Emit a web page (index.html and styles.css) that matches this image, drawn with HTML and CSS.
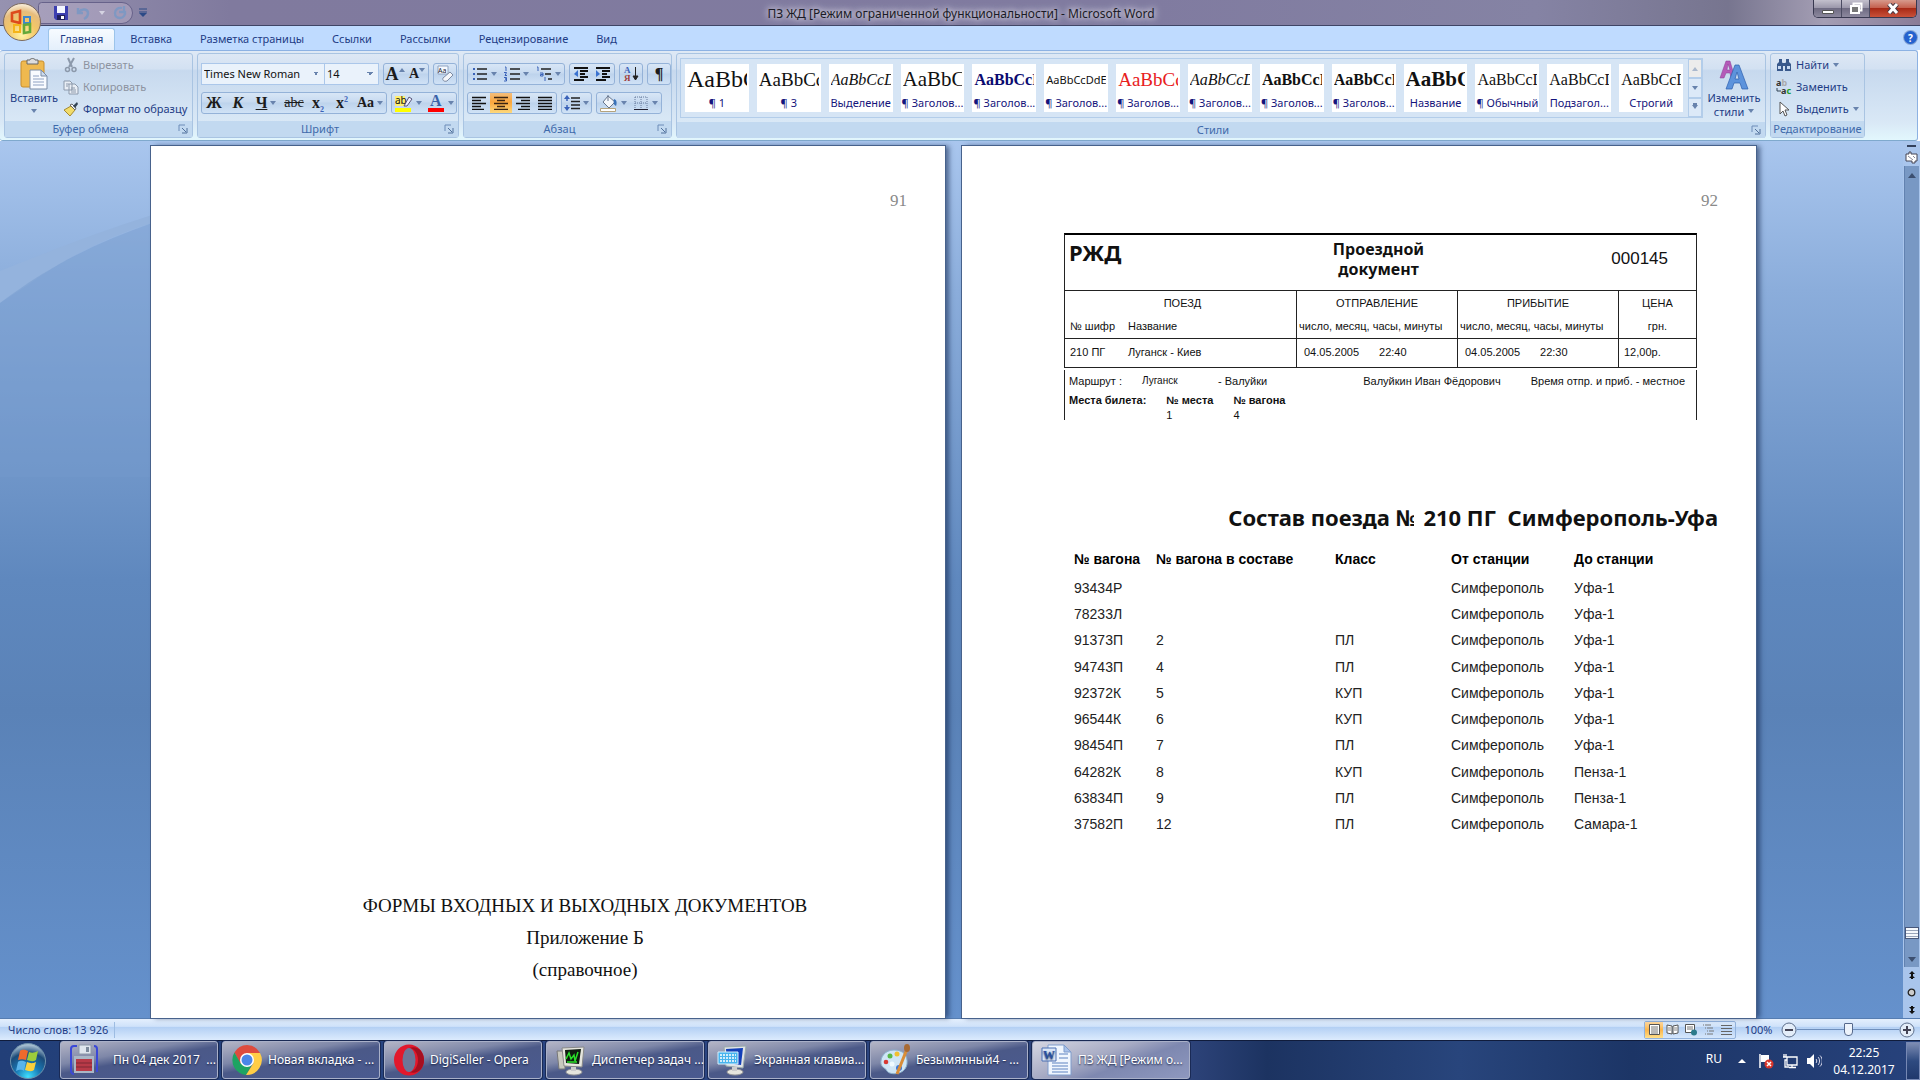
FILE: index.html
```
<!DOCTYPE html>
<html lang="ru">
<head>
    <meta charset="UTF-8">
    <meta name="viewport" content="width=device-width, initial-scale=1.0">
    <title>ПЗ ЖД - Microsoft Word</title>
    <link rel="stylesheet" href="styles.css">
</head>
<body>
    <!-- Title bar -->
    <header class="titlebar">
        <button class="orb" aria-label="Office">
            <svg width="40" height="40" viewBox="0 0 40 40">
                <defs><radialGradient id="gold" cx="50%" cy="85%" r="85%"><stop offset="0" stop-color="#fff3a8"/><stop offset=".45" stop-color="#f3c766"/><stop offset=".75" stop-color="#e6bc7c"/><stop offset="1" stop-color="#fbf3e4"/></radialGradient></defs>
                <circle cx="20" cy="20" r="18.500" fill="url(#gold)" stroke="#7c6a5e"/>
                <g fill="none" stroke-width="2.600">
                    <path d="M18 9l-8 2v8l8 2z" stroke="#dd4a1c"/>
                    <path d="M22 15h6v6h-6z" stroke="#3c87cf" stroke-width="2"/>
                    <path d="M12 23h6v7h-6z" stroke="#f4b41a" stroke-width="2"/>
                    <path d="M22 23l6 -1v8l-6 1z" stroke="#63a83a"/>
                </g>
            </svg>
        </button>
        <div class="quick">
            <button aria-label="Сохранить"><svg width="16" height="16" viewBox="0 0 16 16"><path d="M1 1h14v14H3l-2-2z" fill="#3d3fb0"/><path d="M4 1h8v7H4z" fill="#f3f6ff"/><path d="M4 10h8v5H4z" fill="#20205c"/><path d="M8 11h3v3H8z" fill="#fff"/></svg></button>
            <button aria-label="Отменить"><svg width="16" height="16" viewBox="0 0 16 16"><path d="M2 3v5h5M3 7c3-4 9-3 9 1 0 3-2 5-4 6" fill="none" stroke="#7f98c2" stroke-width="2.500"/></svg></button>
            <i class="caret light"></i>
            <button aria-label="Повторить"><svg width="16" height="16" viewBox="0 0 16 16"><path d="M10 3C6 2 3 5 3 8s2 5 5 5 6-3 5-7M12 1v6H7" fill="none" stroke="#7f98c2" stroke-width="2.300"/></svg></button>
        </div>
        <button class="customize" aria-label="Настройка панели"><svg width="10" height="10" viewBox="0 0 10 10"><path d="M1 1h8M1 4h8" stroke="#2c4a86"/><path d="M1 5h8L5 9z" fill="#2c4a86"/></svg></button>
        <h1>ПЗ ЖД [Режим ограниченной функциональности] - Microsoft Word</h1>
        <div class="window-buttons">
            <button aria-label="Свернуть"><svg width="12" height="12" viewBox="0 0 12 12"><path d="M.5 7.500h11v3H.5z" fill="#fff" stroke="#555"/></svg></button>
            <button aria-label="Развернуть"><svg width="14" height="13" viewBox="0 0 14 13"><path d="M4.500 1.500h8v7h-8z" fill="none" stroke="#fff" stroke-width="2"/><path d="M2 4h8v7H2z" fill="#777" stroke="#fff" stroke-width="2"/></svg></button>
            <button class="close" aria-label="Закрыть"><svg width="12" height="11" viewBox="0 0 12 11"><path d="M2 1l8 9M10 1L2 10" stroke="#4b3a44" stroke-width="5"/><path d="M2 1l8 9M10 1L2 10" stroke="#fff" stroke-width="3"/></svg></button>
        </div>
    </header>

    <!-- Ribbon tabs -->
    <nav class="tabs">
        <a href="#" class="active">Главная</a>
        <a href="#">Вставка</a>
        <a href="#">Разметка страницы</a>
        <a href="#">Ссылки</a>
        <a href="#">Рассылки</a>
        <a href="#">Рецензирование</a>
        <a href="#">Вид</a>
        <button class="help" aria-label="Справка">?</button>
    </nav>

    <!-- Ribbon -->
    <div class="ribbon">
        <section class="group clipboard">
            <div class="tools">
                <button class="big">
                    <svg width="30" height="32" viewBox="0 0 30 32"><rect x="2" y="3" width="23" height="26" rx="2" fill="#efb94f" stroke="#c98e2c"/><path d="M8 2h3c0-2 5-2 5 0h3v4H8z" fill="#ddd" stroke="#666"/><path d="M11 12h11l6 6v13H11z" fill="#f8fbff" stroke="#7b8da8"/><path d="M22 12v6h6z" fill="#cddbed" stroke="#7b8da8"/><path d="M14 18h6M14 21h11M14 24h11M14 27h11" stroke="#8ea1c2"/></svg>
                    <span>Вставить</span>
                    <i class="caret"></i>
                </button>
                <div class="stack">
                    <button class="line off"><svg width="16" height="16" viewBox="0 0 16 16"><path d="M5 1l4 9M11 1L6 10" stroke="#8c99ab" stroke-width="2"/><circle cx="4.500" cy="12.500" r="2" fill="none" stroke="#8c99ab" stroke-width="1.500"/><circle cx="11" cy="12.500" r="2" fill="none" stroke="#8c99ab" stroke-width="1.500"/></svg>Вырезать</button>
                    <button class="line off"><svg width="16" height="16" viewBox="0 0 16 16"><path d="M1 2h6l2 2v7H1zM6 5h6l3 3v7H6z" fill="#e9eef5" stroke="#8c99ab"/><path d="M3 5h3M3 7h2M8 9h4M8 11h5M8 13h5" stroke="#8c99ab"/></svg>Копировать</button>
                    <button class="line"><svg width="16" height="16" viewBox="0 0 16 16"><path d="M8 5l4 4-5 6-6-6z" fill="#f2dc6a" stroke="#a58a32"/><path d="M7 4l5 5 1-2-4-4z" fill="#fff" stroke="#666"/><path d="M10 5l4-4 1 2-3 4z" fill="#345"/></svg>Формат по образцу</button>
                </div>
            </div>
            <h2>Буфер обмена<svg class="launch" width="10" height="10" viewBox="0 0 10 10"><path d="M1 7V1h6" fill="none" stroke="#6c8cb8"/><path d="M4 4l4 4M9 4v5H4" fill="none" stroke="#50709c"/></svg></h2>
        </section>

        <section class="group font">
            <div class="tools rows">
                <div class="row">
                    <div class="combos">
                        <select class="font-name" aria-label="Шрифт"><option>Times New Roman</option></select>
                        <select class="font-size" aria-label="Размер"><option>14</option></select>
                    </div>
                    <div class="set">
                        <button class="serif grow" aria-label="Увеличить размер">A<i class="caret up"></i></button>
                        <button class="serif shrink" aria-label="Уменьшить размер">A<i class="caret"></i></button>
                    </div>
                    <div class="set"><button aria-label="Очистить формат"><svg width="18" height="18" viewBox="0 0 18 18"><path d="M2 1h10v8H2z" fill="#f7faff" stroke="#8fa3c0"/><text x="2" y="8" font-size="7" font-family="Noto Sans" fill="#223">Aa</text><path d="M7 13l7-6 3 3-6 6c-3 1-5-1-4-3z" fill="#f4f6fa" stroke="#7d8ba3"/></svg></button></div>
                </div>
                <div class="row">
                    <div class="set">
                        <button class="serif"><b>Ж</b></button>
                        <button class="serif"><b><em>К</em></b></button>
                        <button class="serif wide"><b><u>Ч</u></b><i class="caret"></i></button>
                        <button class="serif small"><s>abc</s></button>
                        <button class="serif"><b>x<sub>2</sub></b></button>
                        <button class="serif"><b>x<sup>2</sup></b></button>
                        <button class="serif wide small"><b>Aa</b><i class="caret"></i></button>
                    </div>
                    <div class="set">
                        <button class="wide" aria-label="Цвет выделения"><svg width="18" height="18" viewBox="0 0 18 18"><path d="M0 2h10v10H0z" fill="#ffef6e"/><text x="0" y="10" font-size="10" font-family="Noto Sans" fill="#111">ab</text><path d="M9 12l5-9 3 2-5 7z" fill="#eef" stroke="#557"/><path d="M0 14h16v4H0z" fill="#ff0"/></svg><i class="caret"></i></button>
                        <button class="wide" aria-label="Цвет текста"><svg width="18" height="18" viewBox="0 0 18 18"><text x="3" y="12" font-size="16" font-weight="bold" font-family="Liberation Serif" fill="#3a62a8">A</text><path d="M1 14h16v4H1z" fill="#f00"/></svg><i class="caret"></i></button>
                    </div>
                </div>
            </div>
            <h2>Шрифт<svg class="launch" width="10" height="10" viewBox="0 0 10 10"><path d="M1 7V1h6" fill="none" stroke="#6c8cb8"/><path d="M4 4l4 4M9 4v5H4" fill="none" stroke="#50709c"/></svg></h2>
        </section>

        <section class="group paragraph">
            <div class="tools rows">
                <div class="row">
                    <div class="set">
                        <button class="wide" aria-label="Маркеры"><svg width="16" height="16" viewBox="0 0 16 16"><path d="M5 3h10M5 8h10M5 13h10" stroke="#222" stroke-width="1.500"/><path d="M1 2h2v2H1zM1 7h2v2H1zM1 12h2v2H1z" fill="#3a62b8"/></svg><i class="caret"></i></button>
                        <button class="wide" aria-label="Нумерация"><svg width="16" height="16" viewBox="0 0 16 16"><path d="M6 3h10M6 8h10M6 13h10" stroke="#222" stroke-width="1.500"/><path d="M1 1h1v4M0 6.500h2.500L1 9.500h2M0 11.500h2.500v1.500H1h1.500v2H0" fill="none" stroke="#3a62b8"/></svg><i class="caret"></i></button>
                        <button class="wide" aria-label="Многоуровневый список"><svg width="16" height="16" viewBox="0 0 16 16"><path d="M5 3h10M9 8h6M12 13h4" stroke="#222" stroke-width="1.500"/><path d="M1 1h1v4M4 7h3v3H4.500V8.500H7M9 11v4" fill="none" stroke="#3a62b8"/></svg><i class="caret"></i></button>
                    </div>
                    <div class="set">
                        <button aria-label="Уменьшить отступ"><svg width="16" height="16" viewBox="0 0 16 16"><path d="M1 2h14M7 5h8M7 8h5M7 11h8M1 14h10" stroke="#111" stroke-width="2"/><path d="M5 4L1 8l4 3z" fill="#3a72d0"/></svg></button>
                        <button aria-label="Увеличить отступ"><svg width="16" height="16" viewBox="0 0 16 16"><path d="M1 2h14M7 5h8M7 8h5M7 11h8M1 14h10" stroke="#111" stroke-width="2"/><path d="M1 4l4 4-4 3z" fill="#3a72d0"/></svg></button>
                    </div>
                    <div class="set"><button aria-label="Сортировка"><svg width="16" height="18" viewBox="0 0 16 18"><text x="1" y="8" font-size="9" font-weight="bold" font-family="Liberation Serif" fill="#3a62b8">А</text><text x="1" y="16" font-size="9" font-weight="bold" font-family="Liberation Serif" fill="#a04040">Я</text><path d="M12.500 2v12M10 11l2.500 4 2.500-4z" stroke="#222" fill="#222"/></svg></button></div>
                    <div class="set"><button class="serif" aria-label="Знаки абзаца"><b>¶</b></button></div>
                </div>
                <div class="row">
                    <div class="set">
                        <button aria-label="По левому краю"><svg width="16" height="14" viewBox="0 0 16 14"><path d="M1 1.500h14M1 4.500h9M1 7.500h14M1 10.500h9M1 13.500h12" stroke="#111" stroke-width="1.500"/></svg></button>
                        <button class="pressed" aria-label="По центру"><svg width="16" height="14" viewBox="0 0 16 14"><path d="M1 1.500h14M4 4.500h8M1 7.500h14M4 10.500h8M1 13.500h14" stroke="#3a2412" stroke-width="1.500"/></svg></button>
                        <button aria-label="По правому краю"><svg width="16" height="14" viewBox="0 0 16 14"><path d="M1 1.500h14M6 4.500h9M1 7.500h14M6 10.500h9M3 13.500h12" stroke="#111" stroke-width="1.500"/></svg></button>
                        <button aria-label="По ширине"><svg width="16" height="14" viewBox="0 0 16 14"><path d="M1 1.500h14M1 4.500h14M1 7.500h14M1 10.500h14M1 13.500h14" stroke="#111" stroke-width="1.500"/></svg></button>
                    </div>
                    <div class="set"><button class="mid" aria-label="Интервал"><svg width="16" height="16" viewBox="0 0 16 16"><path d="M7 3h9M7 6.500h9M7 10h9M7 13.500h9" stroke="#222" stroke-width="1.500"/><path d="M3 0l3 4H0zM3 16l3-4H0z" fill="#3a62b8"/><path d="M3 3v3M3 10v3" stroke="#3a62b8" stroke-width="1.500"/></svg><i class="caret"></i></button></div>
                    <div class="set">
                        <button class="wide" aria-label="Заливка"><svg width="18" height="18" viewBox="0 0 18 18"><path d="M8 2l7 6-6 6-6-6z" fill="#f4f7fb" stroke="#66758c"/><path d="M14 5c3 1 3 4 2 7-2-1-3-3-2-7z" fill="#3a72b8"/><path d="M8 1v6" stroke="#66758c"/><path d="M.5 14.500h15v3H.5z" fill="#fff" stroke="#b5a37c"/></svg><i class="caret"></i></button>
                        <button class="wide" aria-label="Границы"><svg width="16" height="16" viewBox="0 0 16 16"><path d="M2 2h12v12M2 2v12M8 2v12M2 8h12" fill="none" stroke="#667a9c" stroke-dasharray="1 1"/><path d="M1 14.500h14" stroke="#223"/></svg><i class="caret"></i></button>
                    </div>
                </div>
            </div>
            <h2>Абзац<svg class="launch" width="10" height="10" viewBox="0 0 10 10"><path d="M1 7V1h6" fill="none" stroke="#6c8cb8"/><path d="M4 4l4 4M9 4v5H4" fill="none" stroke="#50709c"/></svg></h2>
        </section>

        <section class="group styles">
            <div class="tools">
                <div class="gallery">
                    <button class="tile xl"><span>AaBbC</span>¶ 1</button>
                    <button class="tile lg"><span>AaBbCc</span>¶ 3</button>
                    <button class="tile it"><span>AaBbCcD</span>Выделение</button>
                    <button class="tile h1"><span>AaBbC</span>¶ Заголов...</button>
                    <button class="tile bold navy"><span>AaBbCcD</span>¶ Заголов...</button>
                    <button class="tile sans"><span>AaBbCcDdE</span>¶ Заголов...</button>
                    <button class="tile lg red"><span>AaBbCc</span>¶ Заголов...</button>
                    <button class="tile it"><span>AaBbCcD</span>¶ Заголов...</button>
                    <button class="tile bold"><span>AaBbCcD</span>¶ Заголов...</button>
                    <button class="tile bold"><span>AaBbCcD</span>¶ Заголов...</button>
                    <button class="tile h1 bold"><span>AaBbC</span>Название</button>
                    <button class="tile"><span>AaBbCcD</span>¶ Обычный</button>
                    <button class="tile"><span>AaBbCcD</span>Подзагол...</button>
                    <button class="tile"><span>AaBbCcD</span>Строгий</button>
                    <div class="scrollers">
                        <button class="off" aria-label="Вверх"><i class="caret up"></i></button>
                        <button aria-label="Вниз"><i class="caret"></i></button>
                        <button class="more" aria-label="Все стили"><i class="caret"></i></button>
                    </div>
                </div>
                <button class="big change">
                    <svg width="32" height="32" viewBox="0 0 32 32"><path d="M2 20L8 3h4l5 17h-4l-1-5H8l-2 5zM9 12h3l-2-6z" fill="#b45ab8" stroke="#8b3f94" stroke-width=".5" fill-rule="evenodd"/><path d="M8 31L17 7h4l9 24h-6l-2-6h-6l-2 6zM17 21h4l-2-7z" fill="#5d93dc" stroke="#2c5fae" stroke-width=".7" fill-rule="evenodd"/></svg>
                    <span>Изменить<br>стили <i class="caret"></i></span>
                </button>
            </div>
            <h2>Стили<svg class="launch" width="10" height="10" viewBox="0 0 10 10"><path d="M1 7V1h6" fill="none" stroke="#6c8cb8"/><path d="M4 4l4 4M9 4v5H4" fill="none" stroke="#50709c"/></svg></h2>
        </section>

        <section class="group editing">
            <div class="tools">
                <div class="stack">
                    <button class="line"><svg width="16" height="16" viewBox="0 0 16 16"><path d="M3 2h3v3l1 2v7H1V7l2-2zM10 2h3v3l2 2v7H9V7l1-2zM6 6h4v3H6z" fill="#39598c"/><path d="M2 9h3v3H2zM11 9h3v3h-3z" fill="#c8daf2"/></svg>Найти<i class="caret"></i></button>
                    <button class="line"><svg width="16" height="16" viewBox="0 0 16 16"><text x="0" y="7" font-size="9" font-weight="bold" font-family="Noto Sans" fill="#333">a<tspan fill="#aaa">b</tspan></text><text x="5" y="15" font-size="9" font-weight="bold" font-family="Noto Sans" fill="#333">a<tspan fill="#1b9c2c">c</tspan></text><path d="M1 9v3h4" fill="none" stroke="#345"/></svg>Заменить</button>
                    <button class="line"><svg width="16" height="16" viewBox="0 0 16 16"><path d="M4 1v12l3-3 2 5 2-1-2-5h4z" fill="#fff" stroke="#555"/></svg>Выделить<i class="caret"></i></button>
                </div>
            </div>
            <h2>Редактирование</h2>
        </section>
    </div>

    <!-- Document area -->
    <main class="workspace">
        <svg class="swoosh" width="152" height="330" viewBox="0 0 152 330" preserveAspectRatio="none"><path d="M0 124C50 104 100 84 152 68v8C100 92 60 115 28 138L0 156z" fill="#94b3dd"/><path d="M0 156C50 118 100 94 152 76v254H0z" fill="#7399cb" fill-opacity=".45"/></svg>
        <div class="pages">
            <article class="page first">
                <p class="page-number">91</p>
                <div class="appendix">
                    <p>ФОРМЫ ВХОДНЫХ И ВЫХОДНЫХ ДОКУМЕНТОВ</p>
                    <p>Приложение Б</p>
                    <p>(справочное)</p>
                </div>
            </article>

            <article class="page second">
                <p class="page-number">92</p>
                <div class="ticket">
                    <div class="ticket-head">
                        <strong class="company">РЖД</strong>
                        <strong class="doc-name">Проездной<br>документ</strong>
                        <span class="doc-number">000145</span>
                    </div>
                    <table class="trip">
                        <thead>
                            <tr><th class="train">ПОЕЗД</th><th class="time">ОТПРАВЛЕНИЕ</th><th class="time">ПРИБЫТИЕ</th><th>ЦЕНА</th></tr>
                            <tr><td><span class="code">№ шифр</span>Название</td><td class="tight">число, месяц, часы, минуты</td><td class="tight">число, месяц, часы, минуты</td><td class="center">грн.</td></tr>
                        </thead>
                        <tbody>
                            <tr><td><span class="code">210 ПГ</span>Луганск - Киев</td><td class="when"><span>04.05.2005</span><span>22:40</span></td><td class="when"><span>04.05.2005</span><span>22:30</span></td><td>12,00р.</td></tr>
                        </tbody>
                    </table>
                    <div class="ticket-tail">
                        <div class="route"><span>Маршрут :</span><small>Луганск</small><span>- Валуйки</span><span class="passenger">Валуйкин Иван Фёдорович</span><span>Время отпр. и приб. - местное</span></div>
                        <dl class="seats">
                            <dt>Места билета:</dt>
                            <div><dt>№ места</dt><dd>1</dd></div>
                            <div><dt>№ вагона</dt><dd>4</dd></div>
                        </dl>
                    </div>
                </div>

                <h2 class="train-title">Состав поезда <span class="cut">№</span> 210 ПГ&nbsp; Симферополь-Уфа</h2>
                <table class="cars">
                    <thead>
                        <tr><th class="c1">№ вагона</th><th class="c2">№ вагона в составе</th><th class="c3">Класс</th><th class="c4">От станции</th><th>До станции</th></tr>
                    </thead>
                    <tbody>
                        <tr><td>93434Р</td><td></td><td></td><td>Симферополь</td><td>Уфа-1</td></tr>
                        <tr><td>78233Л</td><td></td><td></td><td>Симферополь</td><td>Уфа-1</td></tr>
                        <tr><td>91373П</td><td>2</td><td>ПЛ</td><td>Симферополь</td><td>Уфа-1</td></tr>
                        <tr><td>94743П</td><td>4</td><td>ПЛ</td><td>Симферополь</td><td>Уфа-1</td></tr>
                        <tr><td>92372К</td><td>5</td><td>КУП</td><td>Симферополь</td><td>Уфа-1</td></tr>
                        <tr><td>96544К</td><td>6</td><td>КУП</td><td>Симферополь</td><td>Уфа-1</td></tr>
                        <tr><td>98454П</td><td>7</td><td>ПЛ</td><td>Симферополь</td><td>Уфа-1</td></tr>
                        <tr><td>64282К</td><td>8</td><td>КУП</td><td>Симферополь</td><td>Пенза-1</td></tr>
                        <tr><td>63834П</td><td>9</td><td>ПЛ</td><td>Симферополь</td><td>Пенза-1</td></tr>
                        <tr><td>37582П</td><td>12</td><td>ПЛ</td><td>Симферополь</td><td>Самара-1</td></tr>
                    </tbody>
                </table>
            </article>
        </div>

        <aside class="scrollbar">
            <i class="split"></i>
            <button aria-label="Линейка"><svg width="13" height="13" viewBox="0 0 13 13"><path d="M1 3h3V1h2v2h6v7h-2v2H7v-2H1z" fill="#fff" stroke="#445"/><path d="M3 5l5 4M8 5l2 2" stroke="#889"/></svg></button>
            <div class="track">
                <i class="caret up dark"></i>
                <div class="thumb"></div>
                <i class="caret dark"></i>
            </div>
            <button aria-label="Предыдущая страница"><svg width="8" height="9" viewBox="0 0 8 9"><path d="M4 0l3 3H1zM4 4l3 3H1z" fill="#111"/><path d="M3 3h2v5H3z" fill="#111"/></svg></button>
            <button aria-label="Выбор объекта"><svg width="9" height="9" viewBox="0 0 9 9"><circle cx="4.500" cy="4.500" r="3.300" fill="#ccc" stroke="#222" stroke-width="1.300"/></svg></button>
            <button aria-label="Следующая страница"><svg width="8" height="9" viewBox="0 0 8 9"><path d="M4 9l3-3H1zM4 5l3-3H1z" fill="#111"/><path d="M3 1h2v5H3z" fill="#111"/></svg></button>
        </aside>
    </main>

    <!-- Status bar -->
    <footer class="status">
        <span class="words">Число слов: 13 926</span>
        <div class="views">
            <button class="pressed" aria-label="Разметка страницы"><svg width="13" height="13" viewBox="0 0 13 13"><path d="M1.500 1.500h10v10h-10z" fill="#fff" stroke="#555"/><path d="M3 4h7M3 6h7M3 8h7M3 10h7" stroke="#777"/></svg></button>
            <button aria-label="Режим чтения"><svg width="13" height="13" viewBox="0 0 13 13"><path d="M1 2l5 1v8l-5-1zM12 2L7 3v8l5-1z" fill="#fff" stroke="#555"/><path d="M2 5h3M2 7h3M8 5h3M8 7h3" stroke="#888"/></svg></button>
            <button aria-label="Веб-документ"><svg width="13" height="13" viewBox="0 0 13 13"><path d="M1.500 1.500h9v8h-9z" fill="#fff" stroke="#555"/><path d="M3 4h6M3 6h6" stroke="#777"/><circle cx="10" cy="9.500" r="3" fill="#2b7a8c"/></svg></button>
            <button aria-label="Структура"><svg width="13" height="13" viewBox="0 0 13 13"><path d="M1 2h8M3 5h8M5 8h7M3 11h8" stroke="#777" stroke-dasharray="1 1 8"/></svg></button>
            <button aria-label="Черновик"><svg width="13" height="13" viewBox="0 0 13 13"><path d="M1 2.500h11M1 5.500h11M1 8.500h11M1 11.500h11" stroke="#666"/></svg></button>
        </div>
        <label class="percent" for="zoom">100%</label>
        <div class="zoom">
            <button aria-label="Уменьшить"><svg width="16" height="16" viewBox="0 0 16 16"><circle cx="8" cy="8" r="7" fill="#e3edf9" stroke="#5d6f8c"/><path d="M4 8h8" stroke="#445" stroke-width="2"/></svg></button>
            <input type="range" id="zoom" min="0" max="200" value="100">
            <button aria-label="Увеличить"><svg width="16" height="16" viewBox="0 0 16 16"><circle cx="8" cy="8" r="7" fill="#e3edf9" stroke="#5d6f8c"/><path d="M4 8h8M8 4v8" stroke="#445" stroke-width="2"/></svg></button>
        </div>
    </footer>

    <!-- Taskbar -->
    <div class="taskbar">
        <button class="start" aria-label="Пуск">
            <svg width="38" height="38" viewBox="0 0 38 38"><defs><radialGradient id="blue" cx="50%" cy="95%" r="90%"><stop offset="0" stop-color="#3fe0ff"/><stop offset=".4" stop-color="#1878b4"/><stop offset=".75" stop-color="#1c4a78"/><stop offset="1" stop-color="#a5bdd0"/></radialGradient></defs><circle cx="19" cy="19" r="17.500" fill="url(#blue)" stroke="#6f93ac"/><path d="M11 9c3-2 5-1 8 0l-2 9c-3-1-5-1-8 0z" fill="#ee6a2c"/><path d="M20 10c3 1 5 1 9-1l-2 9c-3 2-6 1-9 0z" fill="#9ccc3c"/><path d="M9 20c3-2 5-1 8 0l-2 9c-3-2-5-1-8 0z" fill="#5ab4ea"/><path d="M18 20c3 1 5 2 9 0l-2 8c-3 2-6 1-9 0z" fill="#fbd03c"/></svg>
        </button>
        <button class="task backup"><svg width="32" height="32" viewBox="0 0 32 32"><path d="M8 2H5c-2 0-3 1-3 3v22c0 2 2 3 3 3M25 2c2 0 3 1 3 3v23" fill="none" stroke="#3a48d8" stroke-width="2"/><path d="M5 12h20v17H5z" fill="#a9b7c6"/><path d="M10 1h12v9H10z" fill="#dfe6ee" stroke="#8c98a8"/><path d="M17 3h3v5h-3z" fill="#7c8a9c"/><path d="M7 15h16v12H7z" fill="#b83a48"/><path d="M7 19h16M7 23h16" stroke="#7c2834"/></svg>Пн 04 дек 2017&nbsp; ...</button>
        <button class="task"><svg width="32" height="32" viewBox="0 0 32 32"><path d="M16 1a15 15 0 0 0-12.600 7.500L9.500 20 16 9h13A15 15 0 0 0 16 1z" fill="#dd4b3e"/><path d="M3.400 8.500A15 15 0 0 0 15 31l6.500-11.500L10 20z" fill="#1ea362"/><path d="M29 9H17l5.500 10L15 31A15 15 0 0 0 29 9z" fill="#ffcd46"/><circle cx="16" cy="16" r="7" fill="#fff"/><circle cx="16" cy="16" r="5.500" fill="#4a86e8"/></svg>Новая вкладка - ...</button>
        <button class="task"><svg width="32" height="32" viewBox="0 0 32 32"><ellipse cx="16" cy="16" rx="15" ry="15.500" fill="#e2182c"/><path d="M16 28c5 0 9-5 9-12S21 4 16 4c8-3 15 3 15 12S24 31 16 28z" fill="#a50f20"/><ellipse cx="16" cy="16" rx="6.500" ry="12" fill="#6d7698"/></svg>DigiSeller - Opera</button>
        <button class="task"><svg width="32" height="32" viewBox="0 0 32 32"><path d="M2 7h8v18H4z" fill="#c8c8be" stroke="#777"/><path d="M7 4l22-1-2 20-18-1z" fill="#e6e6de" stroke="#888"/><path d="M10 6l16-1-2 15-13-1z" fill="#101c10"/><path d="M11 15l3-6 2 6 3-4 1 6 3-9M12 18h10" fill="none" stroke="#29e029" stroke-width="1.500"/><ellipse cx="19" cy="28" rx="8" ry="3" fill="#e6e6de" stroke="#999"/><path d="M16 23h5v4h-5z" fill="#ccc"/></svg>Диспетчер задач ...</button>
        <button class="task"><svg width="32" height="32" viewBox="0 0 32 32"><path d="M7 3l22-1-3 22-17-2z" fill="#dfe2e6" stroke="#9aa"/><path d="M9 5l17-1-2 17-14-2z" fill="#123fb8"/><path d="M1 8h20v12H1z" fill="#48b4ee" stroke="#d6eefb"/><path d="M3 11h16M3 14h16M3 17h16" stroke="#fff" stroke-width="1.500" stroke-dasharray="2 1"/><ellipse cx="18" cy="28" rx="8" ry="3" fill="#e6e6de" stroke="#999"/><path d="M15 23h5v4h-5z" fill="#ccc"/></svg>Экранная клавиа...</button>
        <button class="task"><svg width="32" height="32" viewBox="0 0 32 32"><path d="M15 6C6 6 1 13 2 20c1 4 5 4 6 7 2 4 18 5 20-7C29 11 24 6 15 6z" fill="#cfe6f6" stroke="#8bb0cc"/><circle cx="11" cy="12" r="2.500" fill="#58b848"/><circle cx="18" cy="10" r="2.500" fill="#f0c030"/><circle cx="7" cy="18" r="2.300" fill="#d83a34"/><circle cx="13" cy="20" r="2.500" fill="#eefaff"/><circle cx="20" cy="24" r="3" fill="#3a78d8"/><path d="M28 5L18 30" stroke="#d98d38" stroke-width="3"/><ellipse cx="28" cy="4" rx="3" ry="4" fill="#a86a34"/></svg>Безымянный4 - ...</button>
        <button class="task active"><svg width="32" height="32" viewBox="0 0 32 32"><path d="M7 1h16l7 7v23H7z" fill="#f0f6fe" stroke="#7f9ccc"/><path d="M23 1v7h7z" fill="#a9c2ea" stroke="#7f9ccc"/><path d="M18 10h9M18 14h9M11 19h16M11 22h16M11 25h16M11 28h16" stroke="#5c82c0"/><path d="M1 4h14v13H1z" fill="#dbe7f8" stroke="#4c70b4"/><text x="2" y="15" font-size="12" font-weight="bold" font-family="Liberation Serif" fill="#2850a0">W</text></svg>ПЗ ЖД [Режим о...</button>
        <div class="tray">
            <span class="lang">RU</span>
            <i class="caret up white"></i>
            <svg width="16" height="16" viewBox="0 0 16 16"><path d="M2 1v14" stroke="#fff" stroke-width="1.500"/><path d="M3 2h8v7H3z" fill="#fff"/><circle cx="11" cy="11" r="4.500" fill="#d8352b"/><path d="M9 9l4 4M13 9l-4 4" stroke="#fff" stroke-width="1.500"/></svg>
            <svg width="16" height="16" viewBox="0 0 16 16"><path d="M5 4h10v8H5zM10 12v2M7 14.500h7M2 1v3M4 1v3M1 4h4v3H3v7h4" fill="none" stroke="#fff" stroke-width="1.300"/></svg>
            <svg width="16" height="16" viewBox="0 0 16 16"><path d="M1 5h3l4-4v14l-4-4H1z" fill="#fff"/><path d="M10 6c1 1 1 3 0 4M12 4c2 2 2 6 0 8M14 2.500c3 3 3 8 0 11" fill="none" stroke="#dde"/></svg>
            <div class="clock"><time>22:25</time><time>04.12.2017</time></div>
            <button class="peek" aria-label="Показать рабочий стол"></button>
        </div>
    </div>
</body>
</html>
```
FILE: styles.css
```
/* Global Styles */
* {
    box-sizing: border-box;
}

body {
    margin: 0;
    height: 100vh;
    display: flex;
    flex-direction: column;
    overflow: hidden;
    font-family: 'Noto Sans', sans-serif;
    font-size: 11px;
    line-height: 16px;
    color: #1e3c85;
}

button {
    font: inherit;
    color: inherit;
    background: none;
    border: 0;
    padding: 0;
    display: flex;
    align-items: center;
    justify-content: center;
}

h1, h2, p, dl, dd {
    margin: 0;
    font-weight: normal;
    font-size: inherit;
}

svg {
    flex: none;
}

.caret {
    display: inline-block;
    flex: none;
    border: 3px solid transparent;
    border-top: 4px solid #6883ad;
    border-bottom: 0;
}

.caret.up {
    border-top: 0;
    border-bottom: 4px solid #6883ad;
}

.caret.light {
    border-top-color: #d5d3e2;
}

.caret.dark {
    border-width: 4px;
    border-top: 5px solid #3c4f70;
    border-bottom: 0;
}

.caret.up.dark {
    border-top: 0;
    border-bottom: 5px solid #3c4f70;
}

.caret.up.white {
    border-width: 0 4px 4px;
    border-bottom-color: #fff;
}

/* Title Bar */
.titlebar {
    position: relative;
    flex: none;
    height: 26px;
    display: flex;
    padding: 0 3px 0 38px;
    background: linear-gradient(90deg, #9692b0, #807a9e 12%, #807ba0 60%, #8583a4 80%, #77758f 90%, #a49eb4 95%, #8a7c98);
    border-bottom: 1px solid #3f4566;
}

.orb {
    position: absolute;
    left: 2px;
    top: 2px;
    z-index: 2;
}

.quick {
    display: flex;
    align-items: center;
    gap: 7px;
    width: 95px;
    height: 22px;
    margin-top: 2px;
    padding-left: 14px;
    border: 1px solid #67628a;
    border-radius: 4px 12px 12px 0;
    background: rgba(190, 180, 205, 0.45);
}

.customize {
    width: 20px;
}

.titlebar h1 {
    flex: 1;
    text-align: center;
    font-size: 12px;
    line-height: 27px;
    color: #1b1b26;
    text-shadow: 0 0 6px #fff, 0 0 8px #d5d3e4;
    padding-right: 44px;
}

.window-buttons {
    display: flex;
    height: 18px;
    border: 1px solid #383850;
    border-top: 0;
    border-radius: 0 0 5px 5px;
    overflow: hidden;
}

.window-buttons button {
    width: 28px;
    border-right: 1px solid #4b4b62;
    background: linear-gradient(#c3c0cd, #9c98ab 45%, #6f6b82 50%, #8c889e);
}

.window-buttons .close {
    width: 46px;
    border: 0;
    background: linear-gradient(#d79a8c, #c5614e 45%, #a82a16 50%, #c9513a);
}

/* Tabs */
.tabs {
    flex: none;
    display: flex;
    height: 24px;
    padding: 2px 3px 0 48px;
    background: #bfdbff;
}

.tabs a {
    padding: 2px 13px;
    border: 1px solid transparent;
    border-bottom: 0;
    border-radius: 3px 3px 0 0;
    color: inherit;
    text-decoration: none;
    line-height: 16px;
}

.tabs .active {
    padding: 2px 11px;
    margin-right: 1px;
    background: linear-gradient(#f7fbff, #e4effb);
    border-color: #9cc4ea;
}

.help {
    width: 13px;
    height: 13px;
    margin: 3px 0 0 auto;
    border-radius: 50%;
    background: #2462cf;
    box-shadow: 0 0 0 1px #8ba8d4;
    color: #fff;
    font-size: 10px;
    font-weight: bold;
}

/* Ribbon */
.ribbon {
    flex: none;
    display: flex;
    gap: 4px;
    height: 91px;
    margin-right: 2px;
    padding: 2px 52px 2px 4px;
    border: 1px solid #8db2e3;
    border-left: 0;
    border-bottom-color: #7fa9cd;
    border-radius: 3px;
    background: linear-gradient(#dfe9f5, #d3e1f2 20%, #c7d9ee 22%, #d9e8f6 80%, #e2f7fd);
}

.group {
    display: flex;
    flex-direction: column;
    flex: none;
    border: 1px solid #a9c4e2;
    border-radius: 3px;
}

.group h2 {
    position: relative;
    height: 16px;
    padding-right: 16px;
    text-align: center;
    line-height: 16px;
    white-space: nowrap;
    color: #3f6aab;
    background: #c2d9f0;
}

.launch {
    position: absolute;
    right: 4px;
    top: 3px;
}

.tools {
    flex: 1;
    display: flex;
    min-width: 0;
}

.clipboard {
    width: 189px;
}

.font {
    width: 262px;
}

.paragraph {
    width: 209px;
}

.styles {
    flex: 1;
    min-width: 0;
}

.editing {
    width: 95px;
}

.editing h2 {
    padding: 0;
}

.big {
    flex-direction: column;
    justify-content: flex-start;
    width: 58px;
    padding-top: 4px;
    gap: 1px;
    line-height: 14px;
}

.big .caret {
    margin-top: 3px;
}

.change .caret {
    margin: 0 0 3px 1px;
}

.stack {
    display: flex;
    flex-direction: column;
    align-items: flex-start;
}

.line {
    height: 22px;
    gap: 4px;
    white-space: nowrap;
}

.off {
    color: #8d93a0;
}

.rows {
    flex-direction: column;
    gap: 7px;
    padding: 9px 3px 0;
}

.row {
    display: flex;
    gap: 4px;
}

.set {
    display: flex;
    height: 22px;
    border: 1px solid #94b2d8;
    border-radius: 3px;
    background: linear-gradient(#d8e6f6, #c7daf0 45%, #bdd3ec 50%, #d0e2f6);
}

.set button {
    width: 22px;
    gap: 3px;
    color: #1c1c1c;
}

.set .wide {
    width: 32px;
}

.set .mid {
    width: 29px;
}

.set .pressed {
    background: linear-gradient(#f3bd7c, #fba63c 45%, #fdd97c);
}

.font .row:last-child .set button {
    width: 24px;
}

.font .row:last-child .set .wide {
    width: 32px;
}

.combos {
    display: flex;
}

.combos select {
    appearance: none;
    height: 22px;
    padding: 0 2px;
    border: 1px solid #abc7ea;
    border-radius: 0;
    font: inherit;
    color: #111;
    background:
        linear-gradient(45deg, transparent 50%, #6883ad 50%) right 8px top 8px / 3px 3px no-repeat,
        linear-gradient(-45deg, transparent 50%, #6883ad 50%) right 5px top 8px / 3px 3px no-repeat,
        #eaf2fb;
}

.combos .font-name {
    width: 124px;
}

.combos .font-size {
    width: 54px;
    border-left: 0;
}

.serif {
    font-family: 'Liberation Serif', serif;
    font-size: 16px;
}

.set .serif.small {
    font-size: 14px;
}

.grow, .shrink {
    font-weight: bold;
}

.set .grow {
    font-size: 18px;
}

.set .shrink {
    font-size: 14px;
}

.set .grow, .set .shrink {
    gap: 0;
}

.grow .caret, .shrink .caret {
    margin-bottom: 8px;
}

.serif sub, .serif sup {
    font-size: 8px;
    line-height: 1px;
    color: #3a62b8;
}

/* Style Gallery */
.gallery {
    flex: 1;
    display: flex;
    gap: 8px;
    min-width: 0;
    margin: 4px 0 4px 3px;
    padding-left: 4px;
    border: 1px solid #b3cdea;
    background: #d6e5f5;
}

.tile {
    flex: 1;
    flex-direction: column;
    justify-content: flex-end;
    min-width: 0;
    margin: 5px 0;
    padding: 0 2px 1px;
    background: #fff;
    color: #15157c;
    line-height: 16px;
    white-space: nowrap;
}

.tile span {
    align-self: stretch;
    height: 31px;
    overflow: hidden;
    text-align: left;
    font: 16px/31px 'Liberation Serif', serif;
    color: #111;
}

.tile.xl span {
    font-size: 24px;
}

.tile.lg span {
    font-size: 19px;
}

.tile.h1 span {
    font-size: 21px;
}

.tile.it span {
    font-style: italic;
}

.tile.bold span {
    font-weight: bold;
}

.tile.sans span {
    font: 11px/31px 'Noto Sans', sans-serif;
}

.tile.navy span {
    color: #0a0a70;
}

.tile.red span {
    color: #e8201c;
}

.scrollers {
    flex: none;
    width: 14px;
    margin-left: -3px;
    display: flex;
    flex-direction: column;
}

.scrollers button {
    flex: 1;
    border: 1px solid #b3cdea;
    background: #dce9f8;
}

.scrollers .off {
    background: #ececec;
}

.scrollers .off .caret {
    opacity: 0.5;
}

.scrollers .more .caret {
    box-shadow: 0 -3px 0 -1px #6883ad;
}

.change {
    flex: none;
    width: 62px;
}

.editing .stack {
    padding-left: 5px;
}

/* Document Area */
.workspace {
    flex: 1;
    position: relative;
    display: flex;
    min-height: 0;
    padding-top: 5px;
    background: linear-gradient(#a9c6ee, #8baddb 17%, #5f88be 50%, #5a82b7 65%, #6591cc);
}

.swoosh {
    position: absolute;
    left: 0;
    top: 6px;
}

.pages {
    flex: 1;
    display: flex;
    justify-content: center;
    gap: 17px;
    padding-left: 4px;
}

.page {
    position: relative;
    width: 794px;
    background: #fff;
    box-shadow: 0 0 0 1px #47628c, 4px 0 5px rgba(20, 40, 80, 0.6);
    color: #111;
    padding: 43px 38px 32px 102px;
    overflow: hidden;
}

.first {
    display: flex;
    flex-direction: column;
    padding-left: 112px;
}

.page-number {
    text-align: right;
    font: 17px/23px 'Liberation Serif', serif;
    color: #8a8a8a;
}

.appendix {
    margin-top: auto;
    text-align: center;
    font: 19px/32px 'Liberation Serif', serif;
}

/* Ticket */
.ticket {
    width: 633px;
    margin-top: 21px;
    font: 11px/16px 'Liberation Sans', sans-serif;
}

.ticket-head {
    display: grid;
    grid-template-columns: 1fr 160px 1fr;
    height: 57px;
    padding: 4px 8px 0 4px;
    border: 1px solid #222;
    border-top: 2px solid #000;
    border-bottom: 0;
}

.company, .doc-name {
    font-family: 'Noto Sans', sans-serif;
    font-weight: bold;
}

.company {
    font-size: 22px;
    line-height: 26px;
}

.doc-name {
    font-size: 16px;
    line-height: 20px;
    text-align: center;
}

.doc-number {
    padding-right: 20px;
    text-align: right;
    font-size: 17px;
    line-height: 40px;
}

.trip, .cars {
    border-collapse: collapse;
    table-layout: fixed;
    width: 100%;
}

.trip th {
    font-weight: normal;
    padding: 0;
}

.trip .train {
    width: 232px;
    padding-left: 4px;
}

.trip .time {
    width: 161px;
}

.trip td, .trip th {
    height: 24px;
    border-left: 1px solid #222;
    border-right: 1px solid #222;
}

.trip td {
    padding: 0 5px;
    white-space: nowrap;
}

.trip thead tr:first-child, .trip tbody tr {
    border-top: 1px solid #222;
}

.trip tbody td {
    height: 29px;
    padding-bottom: 2px;
    border-bottom: 1px solid #222;
}

.trip td.tight {
    padding: 0 2px;
}

.trip .center {
    text-align: center;
}

.code {
    display: inline-block;
    width: 58px;
}

.when span {
    margin: 0 18px 0 2px;
}

.ticket-tail {
    height: 50px;
    margin-top: 2px;
    padding: 3px 11px 0 4px;
    border: solid #222;
    border-width: 0 1px;
}

.route {
    display: flex;
    gap: 20px;
    white-space: nowrap;
}

.route small {
    font-size: 10px;
    width: 56px;
}

.route .passenger {
    margin: 0 10px 0 auto;
}

.seats {
    display: flex;
    gap: 20px;
    padding-top: 4px;
    line-height: 15px;
}

.seats dt {
    font-weight: bold;
}

/* Train Table */
.train-title {
    margin-top: 83px;
    text-align: right;
    white-space: nowrap;
    font-size: 22px;
    font-weight: bold;
    line-height: 28px;
}

.cut {
    display: inline-block;
    width: 18px;
    margin-right: 4px;
    overflow: hidden;
    vertical-align: bottom;
}

.cars {
    margin: 12px 0 0 10px;
    width: 600px;
    text-align: left;
    font: 14px/18px 'Liberation Sans', sans-serif;
    color: #222;
}

.cars th {
    height: 32px;
    padding: 0;
    color: #000;
    white-space: nowrap;
}

.cars td {
    height: 26px;
    padding: 0;
}

.cars tr:nth-child(4n) td {
    height: 27px;
}

.c1 { width: 82px; }
.c2 { width: 179px; }
.c3 { width: 116px; }
.c4 { width: 123px; }

/* Scrollbar */
.scrollbar {
    width: 17px;
    display: flex;
    flex-direction: column;
    align-items: center;
    background: #a9c5ec;
    margin-top: -5px;
}

.scrollbar button {
    height: 17px;
}

.split {
    width: 9px;
    height: 2px;
    margin: 4px 0 2px;
    background: #33415c;
}

.track {
    flex: 1;
    width: 15px;
    display: flex;
    flex-direction: column;
    align-items: center;
    padding: 7px 0 5px;
    background: #7898c4;
    border-left: 1px solid #6282b0;
}

.thumb {
    width: 14px;
    height: 12px;
    margin: auto 0 18px;
    border: 1px solid #47577a;
    background: repeating-linear-gradient(#f5f8fc 0 2px, #99a5ba 2px 3px);
}

/* Status Bar */
.status {
    flex: none;
    display: flex;
    align-items: center;
    height: 22px;
    padding: 0 5px 0 8px;
    border-top: 1px solid #567db1;
    background: linear-gradient(#e4effd, #cfe2fa 35%, #b4d0f4 40%, #dcebfd);
}

.words {
    width: 107px;
    white-space: nowrap;
    border-right: 1px solid #9dbce2;
}

.views {
    display: flex;
    height: 18px;
    margin-left: auto;
    border: 1px solid #92b2dc;
    border-radius: 2px;
}

.views button {
    width: 18px;
}

.views .pressed {
    background: linear-gradient(#ffd9a0, #fbb54a 50%, #ffe08c);
}

.percent {
    width: 45px;
    text-align: center;
}

.zoom {
    display: flex;
    align-items: center;
}

.zoom input {
    appearance: none;
    width: 102px;
    height: 16px;
    margin: 0;
    background: linear-gradient(#6f8fbc, #6f8fbc) center / 100% 1px no-repeat;
}

.zoom input::-webkit-slider-thumb {
    appearance: none;
    width: 9px;
    height: 13px;
    border: 1px solid #55688c;
    border-radius: 1px 1px 4px 4px;
    background: #edf3fb;
}

/* Taskbar */
.taskbar {
    flex: none;
    display: flex;
    gap: 4px;
    height: 40px;
    font-size: 12px;
    background: linear-gradient(90deg, #223f78, #2b4684 30%, #2d4379 62%, #1c3361 66%, #28457c 76%, #1c3566 85%, #27427c);
    border-top: 1px solid #101c3c;
    color: #fff;
}

.start {
    width: 56px;
}

.task {
    width: 158px;
    height: 38px;
    justify-content: flex-start;
    gap: 5px;
    padding-left: 8px;
    white-space: nowrap;
    border: 1px solid #a9b0c8;
    border-radius: 3px;
    background: linear-gradient(170deg, #b4b5c6, #7e87a8 35%, #4b5988 50%, #4a5a90);
    box-shadow: 0 0 0 1px #1a2a55;
    text-shadow: 0 1px 2px #111c40;
}

.task.backup {
    gap: 12px;
}

.task.active {
    background: linear-gradient(160deg, #d5d6e2, #a7abc4 40%, #7e88b0 60%, #8e98bf);
}

.tray {
    display: flex;
    align-items: center;
    gap: 8px;
    margin-left: auto;
}

.lang {
    margin-right: 8px;
    padding-bottom: 4px;
}

.tray .caret {
    margin-right: 4px;
}

.clock {
    width: 68px;
    text-align: center;
    line-height: 17px;
}

.clock time {
    display: block;
}

.peek {
    width: 14px;
    height: 38px;
    border: 1px solid #7688b4;
    background: linear-gradient(#7d8cb3, #2e4a80 50%, #20386c);
}
```
